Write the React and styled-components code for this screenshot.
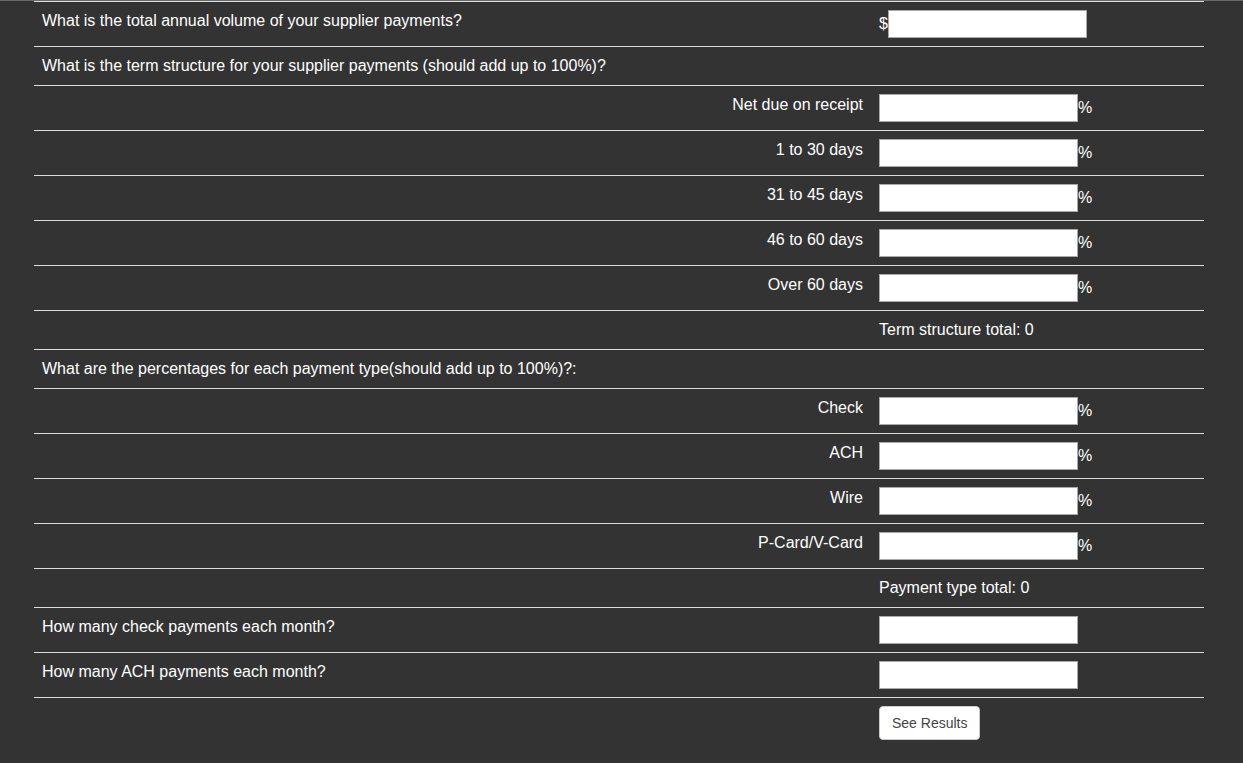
import React, {useState} from "react";
import styled, {createGlobalStyle} from "styled-components";

const GlobalStyle = createGlobalStyle`
  html, body {
    margin: 0;
    padding: 0;
    background-color: #333;
  }
  body {
    min-height: 100vh;
    border-top: 1px solid #6a6a6a;
    box-sizing: border-box;
    font-family: "Liberation Sans", Arial, sans-serif;
  }
`

const Page = styled.div`
  padding: 0 0 0 34px;
  color: #fff;
  font-size: 16px;
`

const Form = styled.form`
  width: 1170px;
  margin: 0;
`

const Row = styled.div`
  display: grid;
  grid-template-columns: 837px 333px;
  border-top: 1px solid #ddd;
`

const Cell = styled.div`
  padding: 8px;
  line-height: 22px;
  text-align: ${props => (props.$right ? "right" : "left")};
  min-height: 22px;
`

const FieldCell = styled.div`
  padding: 8px;
  display: flex;
  align-items: center;
  line-height: 22px;
`

const Field = styled.input`
  box-sizing: border-box;
  width: 199px;
  height: 28px;
  border: 1px solid #a9a9a9;
  background: #fff;
  padding: 2px 4px;
  font-size: 14px;
  font-family: "Liberation Sans", Arial, sans-serif;
  outline: none;
`

const Unit = styled.span`
  font-size: 16px;
  line-height: 22px;
`

const Button = styled.button`
  height: 34px;
  padding: 6px 12px;
  border: 1px solid #ccc;
  border-radius: 4px;
  background: #fff;
  color: #444;
  font-size: 14px;
  line-height: 20px;
  font-family: "Liberation Sans", Arial, sans-serif;
  cursor: pointer;
`

const terms = ["Net due on receipt", "1 to 30 days", "31 to 45 days", "46 to 60 days", "Over 60 days"];
const types = ["Check", "ACH", "Wire", "P-Card/V-Card"];

function PercentRow({label, value, onChange}) {
  return (
    <Row>
      <Cell $right>{label}</Cell>
      <FieldCell>
        <Field type="text" value={value} onChange={onChange} />
        <Unit>%</Unit>
      </FieldCell>
    </Row>
  );
}

export default function App() {
  const [termState, setTermState] = useState(terms.map(() => ""));
  const [typeState, setTypeState] = useState(types.map(() => ""));

  const sum = list => list.reduce((acc, v) => acc + (parseFloat(v) || 0), 0);

  function update(list, setter, i) {
    return e => {
      const next = [...list];
      next[i] = e.target.value;
      setter(next);
    };
  }

  return (
    <Page>
      <GlobalStyle />
      <Form onSubmit={e => e.preventDefault()}>
        <Row>
          <Cell>What is the total annual volume of your supplier payments?</Cell>
          <FieldCell>
            <Unit>$</Unit>
            <Field type="text" />
          </FieldCell>
        </Row>
        <Row>
          <Cell>What is the term structure for your supplier payments (should add up to 100%)?</Cell>
          <Cell />
        </Row>
        {terms.map((t, i) => (
          <PercentRow key={t} label={t} value={termState[i]} onChange={update(termState, setTermState, i)} />
        ))}
        <Row>
          <Cell />
          <Cell>Term structure total: {sum(termState)}</Cell>
        </Row>
        <Row>
          <Cell>What are the percentages for each payment type(should add up to 100%)?:</Cell>
          <Cell />
        </Row>
        {types.map((t, i) => (
          <PercentRow key={t} label={t} value={typeState[i]} onChange={update(typeState, setTypeState, i)} />
        ))}
        <Row>
          <Cell />
          <Cell>Payment type total: {sum(typeState)}</Cell>
        </Row>
        <Row>
          <Cell>How many check payments each month?</Cell>
          <FieldCell>
            <Field type="text" />
          </FieldCell>
        </Row>
        <Row>
          <Cell>How many ACH payments each month?</Cell>
          <FieldCell>
            <Field type="text" />
          </FieldCell>
        </Row>
        <Row>
          <Cell />
          <FieldCell>
            <Button type="submit">See Results</Button>
          </FieldCell>
        </Row>
      </Form>
    </Page>
  );
}
